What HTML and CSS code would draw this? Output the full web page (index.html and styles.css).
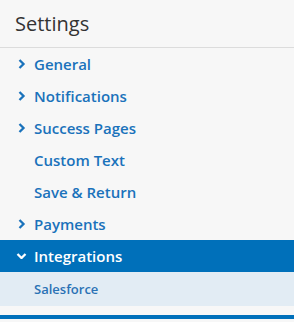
FILE: index.html
```html
<!DOCTYPE html>
<html lang="en">
<head>
  <meta charset="UTF-8">
  <meta name="viewport" content="width=device-width, initial-scale=1.0">
  <title>Settings</title>
  <link rel="stylesheet" href="styles.css">
</head>
<body>

<div class="panel">
  <h2 class="title">Settings</h2>

  <ul class="menu">
    <li class="item">
      <svg class="chev" viewBox="0 0 6 10" width="6" height="10"><path d="M1 1l4 4-4 4" /></svg>
      <span>General</span>
    </li>
    <li class="item">
      <svg class="chev" viewBox="0 0 6 10" width="6" height="10"><path d="M1 1l4 4-4 4" /></svg>
      <span>Notifications</span>
    </li>
    <li class="item">
      <svg class="chev" viewBox="0 0 6 10" width="6" height="10"><path d="M1 1l4 4-4 4" /></svg>
      <span>Success Pages</span>
    </li>
    <li class="item">
      <span class="spacer"></span>
      <span>Custom Text</span>
    </li>
    <li class="item">
      <span class="spacer"></span>
      <span>Save &amp; Return</span>
    </li>
    <li class="item">
      <svg class="chev" viewBox="0 0 6 10" width="6" height="10"><path d="M1 1l4 4-4 4" /></svg>
      <span>Payments</span>
    </li>
    <li class="item active">
      <svg class="chev down" viewBox="0 0 10 6" width="10" height="6"><path d="M1 1l4 4 4-4" /></svg>
      <span>Integrations</span>
    </li>
    <li class="sub">Salesforce</li>
  </ul>

  <div class="bottom-bar"></div>
</div>

</body>
</html>
```

FILE: styles.css
```css
body {
  margin: 0;
  background-color: #f7f7f7;
  font-family: "Open Sans", Arial, sans-serif;
}

.panel {
  width: 294px;
  height: 322px;
  overflow: hidden;
}

.title {
  margin: 0;
  padding: 10px 15px 0;
  height: 37px;
  font-size: 20px;
  font-weight: 400;
  color: #333;
  border-bottom: 1px solid #dcdcdc;
}

.menu {
  list-style: none;
  margin: 0;
  padding: 0;
}

.item {
  display: flex;
  align-items: center;
  height: 32px;
  padding-left: 15px;
  font-size: 15px;
  font-weight: 600;
  color: #1a72bb;
}

.chev {
  width: 13px;
  margin-right: 6px;
  fill: none;
  stroke: #1a72bb;
  stroke-width: 2.3;
}

.spacer {
  width: 19px;
}

.item.active {
  background-color: #0070ba;
  color: #fff;
}

.item.active .chev {
  stroke: #fff;
}

.sub {
  height: 34px;
  line-height: 34px;
  padding-left: 34px;
  font-size: 13px;
  font-weight: 600;
  color: #2a72b5;
  background-color: #e2ecf4;
}

.bottom-bar {
  margin-top: 9px;
  height: 4px;
  background-color: #0070ba;
}
```
